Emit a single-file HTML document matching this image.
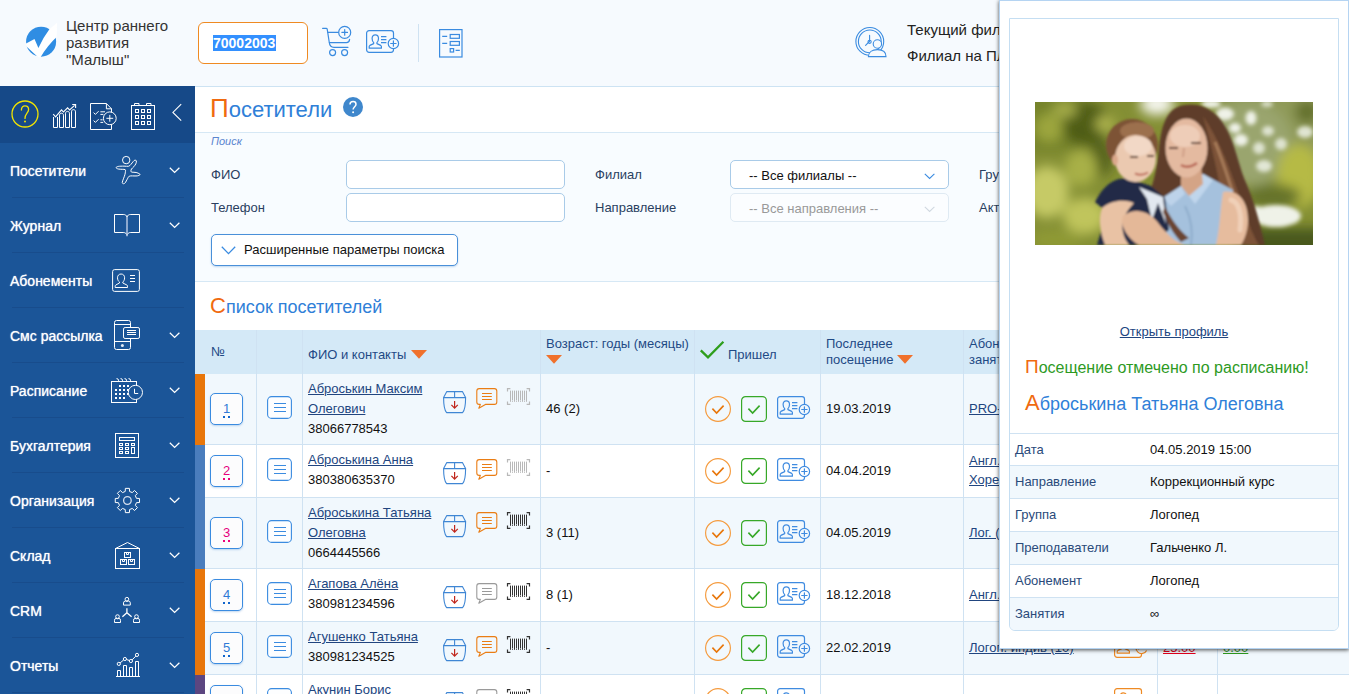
<!DOCTYPE html>
<html lang="ru">
<head>
<meta charset="utf-8">
<title>Посетители</title>
<style>
*{box-sizing:border-box}
html,body{margin:0;padding:0}
body{width:1349px;height:694px;overflow:hidden;position:relative;background:#fff;
  font-family:"Liberation Sans",Arial,sans-serif;font-size:13px;color:#111;line-height:20px}
a{color:#21457f;text-decoration:underline}
svg{display:block;overflow:visible}
.abs{position:absolute}

/* ---------- header ---------- */
#header{position:absolute;left:0;top:0;width:1349px;height:87px;background:#f6fafe;border-bottom:1px solid #cde3f3}
#org{position:absolute;left:66px;top:17px;font-size:15px;line-height:17px;color:#333;width:120px}
#code{position:absolute;left:198px;top:22px;width:110px;height:42px;border:1px solid #ef8a22;border-radius:6px;background:#fff}
#code span{position:absolute;left:14px;top:12px;width:63px;height:16px;line-height:16px;font-size:14px;font-weight:bold;color:#fff;background:#3390ff;white-space:nowrap}
#hsep{position:absolute;left:418px;top:24px;width:1px;height:38px;background:#cfe2f2}
#branch{position:absolute;left:907px;top:17px;font-size:15px;line-height:26px;color:#222;white-space:nowrap}

/* ---------- sidebar ---------- */
#sidebar{position:absolute;left:0;top:86px;width:195px;height:608px;background:#1b5598}
#sidetop{position:absolute;left:0;top:0;width:195px;height:57px;background:#164988}
.mi{position:absolute;left:0;width:195px;height:55px;color:#fff;font-size:14px}
.mi .t{position:absolute;left:10px;top:18px;line-height:20px;white-space:nowrap;text-shadow:0 0 1px rgba(255,255,255,.9)}
.mi .ln{position:absolute;left:12px;top:54px;width:172px;height:1px;background:#184c8c}

/* ---------- main ---------- */
#main{position:absolute;left:0;top:0;width:1349px;height:694px;background:#fff}
h1{position:absolute;left:210px;top:93px;margin:0;font-weight:normal;font-size:22px;line-height:30px;color:#2f80d8;white-space:nowrap}
h1 b,h2 b,.h3 b{font-weight:normal;color:#f06a10}
h1 b{font-size:26px}
#search{position:absolute;left:195px;top:132px;width:1154px;height:150px;background:#f8fcff;border-top:1px solid #d6e8f5;border-bottom:1px solid #d6e8f5}
#search .cap{position:absolute;left:16px;top:1px;font-size:11px;font-style:italic;color:#5b85cf;line-height:14px}
.lbl{position:absolute;font-size:13px;color:#2a3f5f;line-height:20px;white-space:nowrap}
.inp{position:absolute;width:219px;height:29px;border:1px solid #a9cbe8;border-radius:5px;background:#fff}
.sel{position:absolute;width:219px;height:29px;border:1px solid #a9cbe8;border-radius:5px;background:#fff;font-size:13px;line-height:28px;padding-left:18px;padding-top:1px;color:#111}
.sel.dis{border-color:#dfeaf3;color:#999;background:#fbfdff}
#adv{position:absolute;left:211px;top:234px;width:247px;height:32px;border:1px solid #4a90d9;border-radius:5px;background:#fff;font-size:13px;line-height:29px;padding-left:32px;color:#111;box-shadow:0 1px 2px rgba(80,140,210,.35)}
h2{position:absolute;left:210px;top:293px;margin:0;font-weight:normal;font-size:18px;line-height:26px;color:#2f80d8;white-space:nowrap}
h2 b{font-size:22px}

/* ---------- table ---------- */
#thead{position:absolute;left:195px;top:330px;width:1154px;height:44px;background:#d4e9f7}
.th{position:absolute;font-size:13px;line-height:16px;color:#1f4a85;white-space:nowrap}
.vl{position:absolute;top:330px;width:1px;height:364px;background:#cfe2f2}
.row{position:absolute;left:195px;width:1154px;border-bottom:1px solid #cfe2f2}
.bar{position:absolute;left:195px;width:10px}
.num{position:absolute;left:210px;width:33px;height:32px;border:1px solid #3a8be0;border-radius:5px;background:#fcfcfd;text-align:center;line-height:30px;font-size:13px;box-shadow:0 1px 2px rgba(80,140,210,.35)}
.num i{position:absolute;left:12px;top:22px;width:2px;height:2px;background:currentColor;filter:brightness(.8) saturate(1.4)}
.num i.d2{left:17px}
.c{position:absolute;white-space:nowrap;line-height:20px;font-size:13px}

/* ---------- popup ---------- */
#pop{position:absolute;left:999px;top:0;width:350px;height:649px;background:#fff;border:1px solid #b5d4f2;box-shadow:0 1px 4px 0 rgba(0,0,0,.7)}
#box{position:absolute;left:9px;top:17px;width:330px;height:613px;border:1px solid #c5def2;border-radius:0 0 6px 6px;overflow:hidden}
#photo{position:absolute;left:25px;top:83px;width:278px;height:143px;overflow:hidden}
#open{position:absolute;left:0;top:303px;width:100%;text-align:center;font-size:13px;line-height:20px}
.h3{position:absolute;left:16px;margin:0;font-weight:normal;white-space:nowrap}
.kv{position:absolute;left:0;width:328px;height:33px;border-top:1px solid #cfe2f2;font-size:13px;line-height:32px}
.kv.alt{background:#f1f8fd}
.kv span{position:absolute;left:5px;color:#2a4a7a}
.kv em{position:absolute;left:140px;font-style:normal;color:#111}
</style>
</head>
<body>

<!-- ================= MAIN ================= -->
<div id="main">
  <h1><b>П</b>осетители</h1>
  <svg class="abs" style="left:343px;top:97px" width="20" height="20" viewBox="0 0 20 20" fill="none" ><circle cx="10" cy="10" r="10" fill="#3f87cc"/><path d="M7 7.6 C7 5.6 8.4 4.6 10.1 4.6 C11.8 4.6 13 5.8 13 7.2 C13 9.6 10.1 9.8 10.1 12.6" stroke="#fff" stroke-width="1.5"/><circle cx="10.1" cy="15.2" r="1" fill="#fff"/></svg>
  <div id="search">
    <div class="cap">Поиск</div>
  </div>
  <div class="lbl" style="left:211px;top:165px">ФИО</div>
  <div class="inp" style="left:346px;top:160px"></div>
  <div class="lbl" style="left:211px;top:198px">Телефон</div>
  <div class="inp" style="left:346px;top:193px"></div>
  <div class="lbl" style="left:595px;top:165px">Филиал</div>
  <div class="sel" style="left:730px;top:160px">-- Все филиалы --<svg class="abs" style="left:193px;top:12px" width="12" height="7" viewBox="0 0 12 7" fill="none" ><path d="M0.8 0.8 L5.6 5.4 L10.4 0.8" stroke="#3a8be0" stroke-width="1.1"/></svg></div>
  <div class="lbl" style="left:595px;top:198px">Направление</div>
  <div class="sel dis" style="left:730px;top:193px">-- Все направления --<svg class="abs" style="left:193px;top:12px" width="12" height="7" viewBox="0 0 12 7" fill="none" ><path d="M0.8 0.8 L5.6 5.4 L10.4 0.8" stroke="#d0d8e0" stroke-width="1.1"/></svg></div>
  <div class="lbl" style="left:979px;top:165px">Группа</div>
  <div class="lbl" style="left:979px;top:198px">Активность</div>
  <div id="adv"><svg class="abs" style="left:9.2px;top:10.6px" width="16" height="9" viewBox="0 0 16 9" fill="none" ><path d="M0.8 0.8 L7.5 7.6 L14.2 0.8" stroke="#3a8be0" stroke-width="1.3"/></svg>Расширенные параметры поиска</div>
  <h2><b>С</b>писок посетителей</h2>

  <div id="thead"></div>
  <div class="th" style="left:211px;top:344px">№</div>
  <div class="th" style="left:308px;top:347px">ФИО и контакты</div><svg class="abs" style="left:411px;top:350px" width="16" height="9" viewBox="0 0 16 9" fill="none" ><path d="M0 0 H16 L8 8.8 Z" fill="#f0712c"/></svg>
  <div class="th" style="left:546px;top:336px">Возраст: годы (месяцы)</div><svg class="abs" style="left:546px;top:355px" width="16" height="9" viewBox="0 0 16 9" fill="none" ><path d="M0 0 H16 L8 8.8 Z" fill="#f0712c"/></svg>
  <svg class="abs" style="left:700px;top:341px" width="24" height="20" viewBox="0 0 24 20" fill="none" ><path d="M0.8 9.4 L8 16.4 L23.4 0.8" stroke="#2e9e1c" stroke-width="2.3"/></svg>
  <div class="th" style="left:728px;top:347px">Пришел</div>
  <div class="th" style="left:826px;top:336px">Последнее<br>посещение</div><svg class="abs" style="left:897px;top:355px" width="16" height="9" viewBox="0 0 16 9" fill="none" ><path d="M0 0 H16 L8 8.8 Z" fill="#f0712c"/></svg>
  <div class="th" style="left:969px;top:336px">Абонементы /<br>занятия</div>
  <div class="th" style="left:1163px;top:335px">Долг</div>
  <div class="th" style="left:1223px;top:335px">Баланс</div>
<div class="row" style="top:374px;height:71px;background:#f1f8fd"></div>
<div class="bar" style="top:374px;height:71px;background:#e8760a"></div>
<div class="num" style="top:393px;color:#2f7ad6">1<i></i><i class="d2"></i></div>
<svg class="abs" style="left:267px;top:396px" width="25" height="23" viewBox="0 0 25 23" fill="none" ><rect x="0.6" y="0.6" width="23.8" height="21.8" rx="4" stroke="#3a8be0" stroke-width="1.1" fill="#fdfeff"/><path d="M7 7.5 H19 M7 11.5 H19 M7 15.5 H19" stroke="#3a8be0" stroke-width="1"/></svg>
<a class="c" style="left:308px;top:379px">Аброськин Максим</a>
<a class="c" style="left:308px;top:399px">Олегович</a>
<div class="c" style="left:308px;top:419px">38066778543</div>
<svg class="abs" style="left:443px;top:391px" width="23" height="23" viewBox="0 0 23 23" fill="none" ><g stroke="#3f86d4" stroke-width="1.1" stroke-linejoin="round"><path d="M3.8 0.6 H19.4 L22.6 6.6 H0.6 Z"/><path d="M11.6 0.6 V6.6"/><path d="M0.6 6.6 C0.6 13 1 19 3.6 21.6 H19.6 C22.2 19 22.6 13 22.6 6.6"/></g><path d="M11.6 10 V17 M8.4 13.8 L11.6 17.2 L14.8 13.8" stroke="#c0261c" stroke-width="1.2"/></svg>
<svg class="abs" style="left:476px;top:388px" width="22" height="21" viewBox="0 0 22 21" fill="none" ><path d="M3.2 0.6 H18.4 Q20.8 0.6 20.8 3 V14 Q20.8 16.4 18.4 16.4 H9.4 L2.8 20.2 L4.4 16.4 H3.2 Q0.8 16.4 0.8 14 V3 Q0.8 0.6 3.2 0.6 Z" stroke="#ea7d14" stroke-width="1.1" stroke-linejoin="round"/><path d="M6 5.5 H15.8 M6 8.5 H15.8 M6 11.5 H15.8" stroke="#ea7d14" stroke-width="1"/></svg>
<svg class="abs" style="left:506px;top:388px" width="25" height="17" viewBox="0 0 25 17" fill="none" ><path d="M4.4 0.6 H1.5 V3.6 M20.6 0.6 H23.5 V3.6 M1.5 13.4 V16.4 H4.4 M23.5 13.4 V16.4 H20.6" stroke="#b8b8b8" stroke-width="1.2"/><rect x="4" y="2.6" width="1" height="11.2" fill="#b8b8b8"/><rect x="6" y="2.6" width="1" height="9.8" fill="#b8b8b8"/><rect x="6" y="12.9" width="1" height="0.9" fill="#b8b8b8"/><rect x="8" y="2.6" width="1" height="11.2" fill="#b8b8b8"/><rect x="10" y="2.6" width="1" height="9.8" fill="#b8b8b8"/><rect x="10" y="12.9" width="1" height="0.9" fill="#b8b8b8"/><rect x="12" y="2.6" width="1" height="11.2" fill="#b8b8b8"/><rect x="14" y="2.6" width="1" height="9.8" fill="#b8b8b8"/><rect x="14" y="12.9" width="1" height="0.9" fill="#b8b8b8"/><rect x="16" y="2.6" width="1" height="11.2" fill="#b8b8b8"/><rect x="18" y="2.6" width="1" height="9.8" fill="#b8b8b8"/><rect x="18" y="12.9" width="1" height="0.9" fill="#b8b8b8"/><rect x="20" y="2.6" width="1" height="11.2" fill="#b8b8b8"/></svg>
<div class="c" style="left:546px;top:399px">46 (2)</div>
<svg class="abs" style="left:705px;top:396px" width="26" height="26" viewBox="0 0 26 26" fill="none" ><circle cx="13" cy="13" r="12.4" stroke="#f59b3e" stroke-width="1.15"/><path d="M7.4 12.6 L11.6 17 L18.6 9.6" stroke="#e8760a" stroke-width="1.6"/></svg>
<svg class="abs" style="left:741px;top:396px" width="26" height="26" viewBox="0 0 26 26" fill="none" ><rect x="0.6" y="0.6" width="24.8" height="24.8" rx="4" stroke="#37a828" stroke-width="1.2"/><path d="M7.4 12.6 L11.6 17 L18.6 9.6" stroke="#37a828" stroke-width="1.6"/></svg>
<svg class="abs" style="left:777px;top:396px" width="34" height="24" viewBox="0 0 34 24" fill="none" ><g stroke="#3f8be0" stroke-width="1.2" stroke-linejoin="round"><rect x="0.6" y="0.6" width="26.9" height="21.7" rx="2.5"/><path d="M9.3 4.8 C11.4 4.8 12.5 6.4 12.5 8.6 C12.5 10.4 11.8 11.8 10.9 12.7 L10.9 13.6 L14.7 15.4 Q15.4 15.8 15.4 16.6 V18.2 H3.2 V16.6 Q3.2 15.8 3.9 15.4 L7.7 13.6 V12.7 C6.8 11.8 6.1 10.4 6.1 8.6 C6.1 6.4 7.2 4.8 9.3 4.8 Z"/><path d="M15 6.6 H20.4 M15 9.6 H20.4 M15 12.6 H20.4"/><circle cx="27.4" cy="13.5" r="5.2" fill="#f1f8fd"/><path d="M27.4 10.8 V16.2 M24.7 13.5 H30.1" stroke-linecap="round"/></g></svg>
<div class="c" style="left:826px;top:399px">19.03.2019</div>
<a class="c" style="left:969px;top:399px">PRO-группа (8)</a>
<svg class="abs" style="left:1114px;top:396px" width="34" height="24" viewBox="0 0 34 24" fill="none" ><g stroke="#ee8a24" stroke-width="1.2" stroke-linejoin="round"><rect x="0.6" y="0.6" width="26.9" height="21.7" rx="2.5"/><path d="M9.3 4.8 C11.4 4.8 12.5 6.4 12.5 8.6 C12.5 10.4 11.8 11.8 10.9 12.7 L10.9 13.6 L14.7 15.4 Q15.4 15.8 15.4 16.6 V18.2 H3.2 V16.6 Q3.2 15.8 3.9 15.4 L7.7 13.6 V12.7 C6.8 11.8 6.1 10.4 6.1 8.6 C6.1 6.4 7.2 4.8 9.3 4.8 Z"/><path d="M15 6.6 H20.4 M15 9.6 H20.4 M15 12.6 H20.4"/><circle cx="27.6" cy="13" r="5.6" fill="#f1f8fd" stroke="none"/><path d="M32.6 15.4 A5.6 5.6 0 1 1 32.9 11.2 M22.4 15.6 L22.6 12.8 L25.2 14.2" /></g></svg>
<div class="row" style="top:445px;height:53px;background:#fff"></div>
<div class="bar" style="top:445px;height:53px;background:#4a7dbd"></div>
<div class="num" style="top:455px;color:#e6007e">2<i></i><i class="d2"></i></div>
<svg class="abs" style="left:267px;top:458px" width="25" height="23" viewBox="0 0 25 23" fill="none" ><rect x="0.6" y="0.6" width="23.8" height="21.8" rx="4" stroke="#3a8be0" stroke-width="1.1" fill="#fdfeff"/><path d="M7 7.5 H19 M7 11.5 H19 M7 15.5 H19" stroke="#3a8be0" stroke-width="1"/></svg>
<a class="c" style="left:308px;top:450px">Аброськина Анна</a>
<div class="c" style="left:308px;top:470px">380380635370</div>
<svg class="abs" style="left:443px;top:462px" width="23" height="23" viewBox="0 0 23 23" fill="none" ><g stroke="#3f86d4" stroke-width="1.1" stroke-linejoin="round"><path d="M3.8 0.6 H19.4 L22.6 6.6 H0.6 Z"/><path d="M11.6 0.6 V6.6"/><path d="M0.6 6.6 C0.6 13 1 19 3.6 21.6 H19.6 C22.2 19 22.6 13 22.6 6.6"/></g><path d="M11.6 10 V17 M8.4 13.8 L11.6 17.2 L14.8 13.8" stroke="#c0261c" stroke-width="1.2"/></svg>
<svg class="abs" style="left:476px;top:459px" width="22" height="21" viewBox="0 0 22 21" fill="none" ><path d="M3.2 0.6 H18.4 Q20.8 0.6 20.8 3 V14 Q20.8 16.4 18.4 16.4 H9.4 L2.8 20.2 L4.4 16.4 H3.2 Q0.8 16.4 0.8 14 V3 Q0.8 0.6 3.2 0.6 Z" stroke="#ea7d14" stroke-width="1.1" stroke-linejoin="round"/><path d="M6 5.5 H15.8 M6 8.5 H15.8 M6 11.5 H15.8" stroke="#ea7d14" stroke-width="1"/></svg>
<svg class="abs" style="left:506px;top:459px" width="25" height="17" viewBox="0 0 25 17" fill="none" ><path d="M4.4 0.6 H1.5 V3.6 M20.6 0.6 H23.5 V3.6 M1.5 13.4 V16.4 H4.4 M23.5 13.4 V16.4 H20.6" stroke="#b8b8b8" stroke-width="1.2"/><rect x="4" y="2.6" width="1" height="11.2" fill="#b8b8b8"/><rect x="6" y="2.6" width="1" height="9.8" fill="#b8b8b8"/><rect x="6" y="12.9" width="1" height="0.9" fill="#b8b8b8"/><rect x="8" y="2.6" width="1" height="11.2" fill="#b8b8b8"/><rect x="10" y="2.6" width="1" height="9.8" fill="#b8b8b8"/><rect x="10" y="12.9" width="1" height="0.9" fill="#b8b8b8"/><rect x="12" y="2.6" width="1" height="11.2" fill="#b8b8b8"/><rect x="14" y="2.6" width="1" height="9.8" fill="#b8b8b8"/><rect x="14" y="12.9" width="1" height="0.9" fill="#b8b8b8"/><rect x="16" y="2.6" width="1" height="11.2" fill="#b8b8b8"/><rect x="18" y="2.6" width="1" height="9.8" fill="#b8b8b8"/><rect x="18" y="12.9" width="1" height="0.9" fill="#b8b8b8"/><rect x="20" y="2.6" width="1" height="11.2" fill="#b8b8b8"/></svg>
<div class="c" style="left:546px;top:461px">-</div>
<svg class="abs" style="left:705px;top:458px" width="26" height="26" viewBox="0 0 26 26" fill="none" ><circle cx="13" cy="13" r="12.4" stroke="#f59b3e" stroke-width="1.15"/><path d="M7.4 12.6 L11.6 17 L18.6 9.6" stroke="#e8760a" stroke-width="1.6"/></svg>
<svg class="abs" style="left:741px;top:458px" width="26" height="26" viewBox="0 0 26 26" fill="none" ><rect x="0.6" y="0.6" width="24.8" height="24.8" rx="4" stroke="#37a828" stroke-width="1.2"/><path d="M7.4 12.6 L11.6 17 L18.6 9.6" stroke="#37a828" stroke-width="1.6"/></svg>
<svg class="abs" style="left:777px;top:458px" width="34" height="24" viewBox="0 0 34 24" fill="none" ><g stroke="#3f8be0" stroke-width="1.2" stroke-linejoin="round"><rect x="0.6" y="0.6" width="26.9" height="21.7" rx="2.5"/><path d="M9.3 4.8 C11.4 4.8 12.5 6.4 12.5 8.6 C12.5 10.4 11.8 11.8 10.9 12.7 L10.9 13.6 L14.7 15.4 Q15.4 15.8 15.4 16.6 V18.2 H3.2 V16.6 Q3.2 15.8 3.9 15.4 L7.7 13.6 V12.7 C6.8 11.8 6.1 10.4 6.1 8.6 C6.1 6.4 7.2 4.8 9.3 4.8 Z"/><path d="M15 6.6 H20.4 M15 9.6 H20.4 M15 12.6 H20.4"/><circle cx="27.4" cy="13.5" r="5.2" fill="#fff"/><path d="M27.4 10.8 V16.2 M24.7 13.5 H30.1" stroke-linecap="round"/></g></svg>
<div class="c" style="left:826px;top:461px">04.04.2019</div>
<a class="c" style="left:969px;top:451px">Англ. язык (12)</a>
<a class="c" style="left:969px;top:470px">Хореография (8)</a>
<svg class="abs" style="left:1114px;top:458px" width="34" height="24" viewBox="0 0 34 24" fill="none" ><g stroke="#ee8a24" stroke-width="1.2" stroke-linejoin="round"><rect x="0.6" y="0.6" width="26.9" height="21.7" rx="2.5"/><path d="M9.3 4.8 C11.4 4.8 12.5 6.4 12.5 8.6 C12.5 10.4 11.8 11.8 10.9 12.7 L10.9 13.6 L14.7 15.4 Q15.4 15.8 15.4 16.6 V18.2 H3.2 V16.6 Q3.2 15.8 3.9 15.4 L7.7 13.6 V12.7 C6.8 11.8 6.1 10.4 6.1 8.6 C6.1 6.4 7.2 4.8 9.3 4.8 Z"/><path d="M15 6.6 H20.4 M15 9.6 H20.4 M15 12.6 H20.4"/><circle cx="27.6" cy="13" r="5.6" fill="#fff" stroke="none"/><path d="M32.6 15.4 A5.6 5.6 0 1 1 32.9 11.2 M22.4 15.6 L22.6 12.8 L25.2 14.2" /></g></svg>
<div class="row" style="top:498px;height:71px;background:#f1f8fd"></div>
<div class="bar" style="top:498px;height:71px;background:#4a7dbd"></div>
<div class="num" style="top:517px;color:#e6007e">3<i></i><i class="d2"></i></div>
<svg class="abs" style="left:267px;top:520px" width="25" height="23" viewBox="0 0 25 23" fill="none" ><rect x="0.6" y="0.6" width="23.8" height="21.8" rx="4" stroke="#3a8be0" stroke-width="1.1" fill="#fdfeff"/><path d="M7 7.5 H19 M7 11.5 H19 M7 15.5 H19" stroke="#3a8be0" stroke-width="1"/></svg>
<a class="c" style="left:308px;top:503px">Аброськина Татьяна</a>
<a class="c" style="left:308px;top:523px">Олеговна</a>
<div class="c" style="left:308px;top:543px">0664445566</div>
<svg class="abs" style="left:443px;top:515px" width="23" height="23" viewBox="0 0 23 23" fill="none" ><g stroke="#3f86d4" stroke-width="1.1" stroke-linejoin="round"><path d="M3.8 0.6 H19.4 L22.6 6.6 H0.6 Z"/><path d="M11.6 0.6 V6.6"/><path d="M0.6 6.6 C0.6 13 1 19 3.6 21.6 H19.6 C22.2 19 22.6 13 22.6 6.6"/></g><path d="M11.6 10 V17 M8.4 13.8 L11.6 17.2 L14.8 13.8" stroke="#c0261c" stroke-width="1.2"/></svg>
<svg class="abs" style="left:476px;top:512px" width="22" height="21" viewBox="0 0 22 21" fill="none" ><path d="M3.2 0.6 H18.4 Q20.8 0.6 20.8 3 V14 Q20.8 16.4 18.4 16.4 H9.4 L2.8 20.2 L4.4 16.4 H3.2 Q0.8 16.4 0.8 14 V3 Q0.8 0.6 3.2 0.6 Z" stroke="#ea7d14" stroke-width="1.1" stroke-linejoin="round"/><path d="M6 5.5 H15.8 M6 8.5 H15.8 M6 11.5 H15.8" stroke="#ea7d14" stroke-width="1"/></svg>
<svg class="abs" style="left:506px;top:512px" width="25" height="17" viewBox="0 0 25 17" fill="none" ><path d="M4.4 0.6 H1.5 V3.6 M20.6 0.6 H23.5 V3.6 M1.5 13.4 V16.4 H4.4 M23.5 13.4 V16.4 H20.6" stroke="#333" stroke-width="1.2"/><rect x="4" y="2.6" width="1" height="11.2" fill="#333"/><rect x="6" y="2.6" width="1" height="9.8" fill="#333"/><rect x="6" y="12.9" width="1" height="0.9" fill="#333"/><rect x="8" y="2.6" width="1" height="11.2" fill="#333"/><rect x="10" y="2.6" width="1" height="9.8" fill="#333"/><rect x="10" y="12.9" width="1" height="0.9" fill="#333"/><rect x="12" y="2.6" width="1" height="11.2" fill="#333"/><rect x="14" y="2.6" width="1" height="9.8" fill="#333"/><rect x="14" y="12.9" width="1" height="0.9" fill="#333"/><rect x="16" y="2.6" width="1" height="11.2" fill="#333"/><rect x="18" y="2.6" width="1" height="9.8" fill="#333"/><rect x="18" y="12.9" width="1" height="0.9" fill="#333"/><rect x="20" y="2.6" width="1" height="11.2" fill="#333"/></svg>
<div class="c" style="left:546px;top:523px">3 (11)</div>
<svg class="abs" style="left:705px;top:520px" width="26" height="26" viewBox="0 0 26 26" fill="none" ><circle cx="13" cy="13" r="12.4" stroke="#f59b3e" stroke-width="1.15"/><path d="M7.4 12.6 L11.6 17 L18.6 9.6" stroke="#e8760a" stroke-width="1.6"/></svg>
<svg class="abs" style="left:741px;top:520px" width="26" height="26" viewBox="0 0 26 26" fill="none" ><rect x="0.6" y="0.6" width="24.8" height="24.8" rx="4" stroke="#37a828" stroke-width="1.2"/><path d="M7.4 12.6 L11.6 17 L18.6 9.6" stroke="#37a828" stroke-width="1.6"/></svg>
<svg class="abs" style="left:777px;top:520px" width="34" height="24" viewBox="0 0 34 24" fill="none" ><g stroke="#3f8be0" stroke-width="1.2" stroke-linejoin="round"><rect x="0.6" y="0.6" width="26.9" height="21.7" rx="2.5"/><path d="M9.3 4.8 C11.4 4.8 12.5 6.4 12.5 8.6 C12.5 10.4 11.8 11.8 10.9 12.7 L10.9 13.6 L14.7 15.4 Q15.4 15.8 15.4 16.6 V18.2 H3.2 V16.6 Q3.2 15.8 3.9 15.4 L7.7 13.6 V12.7 C6.8 11.8 6.1 10.4 6.1 8.6 C6.1 6.4 7.2 4.8 9.3 4.8 Z"/><path d="M15 6.6 H20.4 M15 9.6 H20.4 M15 12.6 H20.4"/><circle cx="27.4" cy="13.5" r="5.2" fill="#f1f8fd"/><path d="M27.4 10.8 V16.2 M24.7 13.5 H30.1" stroke-linecap="round"/></g></svg>
<div class="c" style="left:826px;top:523px">04.05.2019</div>
<a class="c" style="left:969px;top:523px">Лог. (∞)</a>
<svg class="abs" style="left:1114px;top:520px" width="34" height="24" viewBox="0 0 34 24" fill="none" ><g stroke="#ee8a24" stroke-width="1.2" stroke-linejoin="round"><rect x="0.6" y="0.6" width="26.9" height="21.7" rx="2.5"/><path d="M9.3 4.8 C11.4 4.8 12.5 6.4 12.5 8.6 C12.5 10.4 11.8 11.8 10.9 12.7 L10.9 13.6 L14.7 15.4 Q15.4 15.8 15.4 16.6 V18.2 H3.2 V16.6 Q3.2 15.8 3.9 15.4 L7.7 13.6 V12.7 C6.8 11.8 6.1 10.4 6.1 8.6 C6.1 6.4 7.2 4.8 9.3 4.8 Z"/><path d="M15 6.6 H20.4 M15 9.6 H20.4 M15 12.6 H20.4"/><circle cx="27.6" cy="13" r="5.6" fill="#f1f8fd" stroke="none"/><path d="M32.6 15.4 A5.6 5.6 0 1 1 32.9 11.2 M22.4 15.6 L22.6 12.8 L25.2 14.2" /></g></svg>
<div class="row" style="top:569px;height:53px;background:#fff"></div>
<div class="bar" style="top:569px;height:53px;background:#e8760a"></div>
<div class="num" style="top:579px;color:#2f7ad6">4<i></i><i class="d2"></i></div>
<svg class="abs" style="left:267px;top:582px" width="25" height="23" viewBox="0 0 25 23" fill="none" ><rect x="0.6" y="0.6" width="23.8" height="21.8" rx="4" stroke="#3a8be0" stroke-width="1.1" fill="#fdfeff"/><path d="M7 7.5 H19 M7 11.5 H19 M7 15.5 H19" stroke="#3a8be0" stroke-width="1"/></svg>
<a class="c" style="left:308px;top:574px">Агапова Алёна</a>
<div class="c" style="left:308px;top:594px">380981234596</div>
<svg class="abs" style="left:443px;top:586px" width="23" height="23" viewBox="0 0 23 23" fill="none" ><g stroke="#3f86d4" stroke-width="1.1" stroke-linejoin="round"><path d="M3.8 0.6 H19.4 L22.6 6.6 H0.6 Z"/><path d="M11.6 0.6 V6.6"/><path d="M0.6 6.6 C0.6 13 1 19 3.6 21.6 H19.6 C22.2 19 22.6 13 22.6 6.6"/></g><path d="M11.6 10 V17 M8.4 13.8 L11.6 17.2 L14.8 13.8" stroke="#c0261c" stroke-width="1.2"/></svg>
<svg class="abs" style="left:476px;top:583px" width="22" height="21" viewBox="0 0 22 21" fill="none" ><path d="M3.2 0.6 H18.4 Q20.8 0.6 20.8 3 V14 Q20.8 16.4 18.4 16.4 H9.4 L2.8 20.2 L4.4 16.4 H3.2 Q0.8 16.4 0.8 14 V3 Q0.8 0.6 3.2 0.6 Z" stroke="#9a9a9a" stroke-width="1.1" stroke-linejoin="round"/><path d="M6 5.5 H15.8 M6 8.5 H15.8 M6 11.5 H15.8" stroke="#9a9a9a" stroke-width="1"/></svg>
<svg class="abs" style="left:506px;top:583px" width="25" height="17" viewBox="0 0 25 17" fill="none" ><path d="M4.4 0.6 H1.5 V3.6 M20.6 0.6 H23.5 V3.6 M1.5 13.4 V16.4 H4.4 M23.5 13.4 V16.4 H20.6" stroke="#333" stroke-width="1.2"/><rect x="4" y="2.6" width="1" height="11.2" fill="#333"/><rect x="6" y="2.6" width="1" height="9.8" fill="#333"/><rect x="6" y="12.9" width="1" height="0.9" fill="#333"/><rect x="8" y="2.6" width="1" height="11.2" fill="#333"/><rect x="10" y="2.6" width="1" height="9.8" fill="#333"/><rect x="10" y="12.9" width="1" height="0.9" fill="#333"/><rect x="12" y="2.6" width="1" height="11.2" fill="#333"/><rect x="14" y="2.6" width="1" height="9.8" fill="#333"/><rect x="14" y="12.9" width="1" height="0.9" fill="#333"/><rect x="16" y="2.6" width="1" height="11.2" fill="#333"/><rect x="18" y="2.6" width="1" height="9.8" fill="#333"/><rect x="18" y="12.9" width="1" height="0.9" fill="#333"/><rect x="20" y="2.6" width="1" height="11.2" fill="#333"/></svg>
<div class="c" style="left:546px;top:585px">8 (1)</div>
<svg class="abs" style="left:705px;top:582px" width="26" height="26" viewBox="0 0 26 26" fill="none" ><circle cx="13" cy="13" r="12.4" stroke="#f59b3e" stroke-width="1.15"/><path d="M7.4 12.6 L11.6 17 L18.6 9.6" stroke="#e8760a" stroke-width="1.6"/></svg>
<svg class="abs" style="left:741px;top:582px" width="26" height="26" viewBox="0 0 26 26" fill="none" ><rect x="0.6" y="0.6" width="24.8" height="24.8" rx="4" stroke="#37a828" stroke-width="1.2"/><path d="M7.4 12.6 L11.6 17 L18.6 9.6" stroke="#37a828" stroke-width="1.6"/></svg>
<svg class="abs" style="left:777px;top:582px" width="34" height="24" viewBox="0 0 34 24" fill="none" ><g stroke="#3f8be0" stroke-width="1.2" stroke-linejoin="round"><rect x="0.6" y="0.6" width="26.9" height="21.7" rx="2.5"/><path d="M9.3 4.8 C11.4 4.8 12.5 6.4 12.5 8.6 C12.5 10.4 11.8 11.8 10.9 12.7 L10.9 13.6 L14.7 15.4 Q15.4 15.8 15.4 16.6 V18.2 H3.2 V16.6 Q3.2 15.8 3.9 15.4 L7.7 13.6 V12.7 C6.8 11.8 6.1 10.4 6.1 8.6 C6.1 6.4 7.2 4.8 9.3 4.8 Z"/><path d="M15 6.6 H20.4 M15 9.6 H20.4 M15 12.6 H20.4"/><circle cx="27.4" cy="13.5" r="5.2" fill="#fff"/><path d="M27.4 10.8 V16.2 M24.7 13.5 H30.1" stroke-linecap="round"/></g></svg>
<div class="c" style="left:826px;top:585px">18.12.2018</div>
<a class="c" style="left:969px;top:585px">Англ. язык (4)</a>
<svg class="abs" style="left:1114px;top:582px" width="34" height="24" viewBox="0 0 34 24" fill="none" ><g stroke="#ee8a24" stroke-width="1.2" stroke-linejoin="round"><rect x="0.6" y="0.6" width="26.9" height="21.7" rx="2.5"/><path d="M9.3 4.8 C11.4 4.8 12.5 6.4 12.5 8.6 C12.5 10.4 11.8 11.8 10.9 12.7 L10.9 13.6 L14.7 15.4 Q15.4 15.8 15.4 16.6 V18.2 H3.2 V16.6 Q3.2 15.8 3.9 15.4 L7.7 13.6 V12.7 C6.8 11.8 6.1 10.4 6.1 8.6 C6.1 6.4 7.2 4.8 9.3 4.8 Z"/><path d="M15 6.6 H20.4 M15 9.6 H20.4 M15 12.6 H20.4"/><circle cx="27.6" cy="13" r="5.6" fill="#fff" stroke="none"/><path d="M32.6 15.4 A5.6 5.6 0 1 1 32.9 11.2 M22.4 15.6 L22.6 12.8 L25.2 14.2" /></g></svg>
<div class="row" style="top:622px;height:53px;background:#f1f8fd"></div>
<div class="bar" style="top:622px;height:53px;background:#e8760a"></div>
<div class="num" style="top:632px;color:#2f7ad6">5<i></i><i class="d2"></i></div>
<svg class="abs" style="left:267px;top:635px" width="25" height="23" viewBox="0 0 25 23" fill="none" ><rect x="0.6" y="0.6" width="23.8" height="21.8" rx="4" stroke="#3a8be0" stroke-width="1.1" fill="#fdfeff"/><path d="M7 7.5 H19 M7 11.5 H19 M7 15.5 H19" stroke="#3a8be0" stroke-width="1"/></svg>
<a class="c" style="left:308px;top:627px">Агушенко Татьяна</a>
<div class="c" style="left:308px;top:647px">380981234525</div>
<svg class="abs" style="left:443px;top:639px" width="23" height="23" viewBox="0 0 23 23" fill="none" ><g stroke="#3f86d4" stroke-width="1.1" stroke-linejoin="round"><path d="M3.8 0.6 H19.4 L22.6 6.6 H0.6 Z"/><path d="M11.6 0.6 V6.6"/><path d="M0.6 6.6 C0.6 13 1 19 3.6 21.6 H19.6 C22.2 19 22.6 13 22.6 6.6"/></g><path d="M11.6 10 V17 M8.4 13.8 L11.6 17.2 L14.8 13.8" stroke="#c0261c" stroke-width="1.2"/></svg>
<svg class="abs" style="left:476px;top:636px" width="22" height="21" viewBox="0 0 22 21" fill="none" ><path d="M3.2 0.6 H18.4 Q20.8 0.6 20.8 3 V14 Q20.8 16.4 18.4 16.4 H9.4 L2.8 20.2 L4.4 16.4 H3.2 Q0.8 16.4 0.8 14 V3 Q0.8 0.6 3.2 0.6 Z" stroke="#ea7d14" stroke-width="1.1" stroke-linejoin="round"/><path d="M6 5.5 H15.8 M6 8.5 H15.8 M6 11.5 H15.8" stroke="#ea7d14" stroke-width="1"/></svg>
<svg class="abs" style="left:506px;top:636px" width="25" height="17" viewBox="0 0 25 17" fill="none" ><path d="M4.4 0.6 H1.5 V3.6 M20.6 0.6 H23.5 V3.6 M1.5 13.4 V16.4 H4.4 M23.5 13.4 V16.4 H20.6" stroke="#333" stroke-width="1.2"/><rect x="4" y="2.6" width="1" height="11.2" fill="#333"/><rect x="6" y="2.6" width="1" height="9.8" fill="#333"/><rect x="6" y="12.9" width="1" height="0.9" fill="#333"/><rect x="8" y="2.6" width="1" height="11.2" fill="#333"/><rect x="10" y="2.6" width="1" height="9.8" fill="#333"/><rect x="10" y="12.9" width="1" height="0.9" fill="#333"/><rect x="12" y="2.6" width="1" height="11.2" fill="#333"/><rect x="14" y="2.6" width="1" height="9.8" fill="#333"/><rect x="14" y="12.9" width="1" height="0.9" fill="#333"/><rect x="16" y="2.6" width="1" height="11.2" fill="#333"/><rect x="18" y="2.6" width="1" height="9.8" fill="#333"/><rect x="18" y="12.9" width="1" height="0.9" fill="#333"/><rect x="20" y="2.6" width="1" height="11.2" fill="#333"/></svg>
<div class="c" style="left:546px;top:638px">-</div>
<svg class="abs" style="left:705px;top:635px" width="26" height="26" viewBox="0 0 26 26" fill="none" ><circle cx="13" cy="13" r="12.4" stroke="#f59b3e" stroke-width="1.15"/><path d="M7.4 12.6 L11.6 17 L18.6 9.6" stroke="#e8760a" stroke-width="1.6"/></svg>
<svg class="abs" style="left:741px;top:635px" width="26" height="26" viewBox="0 0 26 26" fill="none" ><rect x="0.6" y="0.6" width="24.8" height="24.8" rx="4" stroke="#37a828" stroke-width="1.2"/><path d="M7.4 12.6 L11.6 17 L18.6 9.6" stroke="#37a828" stroke-width="1.6"/></svg>
<svg class="abs" style="left:777px;top:635px" width="34" height="24" viewBox="0 0 34 24" fill="none" ><g stroke="#3f8be0" stroke-width="1.2" stroke-linejoin="round"><rect x="0.6" y="0.6" width="26.9" height="21.7" rx="2.5"/><path d="M9.3 4.8 C11.4 4.8 12.5 6.4 12.5 8.6 C12.5 10.4 11.8 11.8 10.9 12.7 L10.9 13.6 L14.7 15.4 Q15.4 15.8 15.4 16.6 V18.2 H3.2 V16.6 Q3.2 15.8 3.9 15.4 L7.7 13.6 V12.7 C6.8 11.8 6.1 10.4 6.1 8.6 C6.1 6.4 7.2 4.8 9.3 4.8 Z"/><path d="M15 6.6 H20.4 M15 9.6 H20.4 M15 12.6 H20.4"/><circle cx="27.4" cy="13.5" r="5.2" fill="#f1f8fd"/><path d="M27.4 10.8 V16.2 M24.7 13.5 H30.1" stroke-linecap="round"/></g></svg>
<div class="c" style="left:826px;top:638px">22.02.2019</div>
<a class="c" style="left:969px;top:638px">Логоп. индив (10)</a>
<svg class="abs" style="left:1114px;top:635px" width="34" height="24" viewBox="0 0 34 24" fill="none" ><g stroke="#ee8a24" stroke-width="1.2" stroke-linejoin="round"><rect x="0.6" y="0.6" width="26.9" height="21.7" rx="2.5"/><path d="M9.3 4.8 C11.4 4.8 12.5 6.4 12.5 8.6 C12.5 10.4 11.8 11.8 10.9 12.7 L10.9 13.6 L14.7 15.4 Q15.4 15.8 15.4 16.6 V18.2 H3.2 V16.6 Q3.2 15.8 3.9 15.4 L7.7 13.6 V12.7 C6.8 11.8 6.1 10.4 6.1 8.6 C6.1 6.4 7.2 4.8 9.3 4.8 Z"/><path d="M15 6.6 H20.4 M15 9.6 H20.4 M15 12.6 H20.4"/><circle cx="27.6" cy="13" r="5.6" fill="#f1f8fd" stroke="none"/><path d="M32.6 15.4 A5.6 5.6 0 1 1 32.9 11.2 M22.4 15.6 L22.6 12.8 L25.2 14.2" /></g></svg>
<a class="c" style="left:1163px;top:638px;color:#e3001b">25.00</a>
<a class="c" style="left:1223px;top:638px;color:#2e9a1f">0.00</a>
<div class="row" style="top:675px;height:53px;background:#fff"></div>
<div class="bar" style="top:675px;height:53px;background:#5c4680"></div>
<div class="num" style="top:685px;color:#2f7ad6">6<i></i><i class="d2"></i></div>
<svg class="abs" style="left:267px;top:688px" width="25" height="23" viewBox="0 0 25 23" fill="none" ><rect x="0.6" y="0.6" width="23.8" height="21.8" rx="4" stroke="#3a8be0" stroke-width="1.1" fill="#fdfeff"/><path d="M7 7.5 H19 M7 11.5 H19 M7 15.5 H19" stroke="#3a8be0" stroke-width="1"/></svg>
<a class="c" style="left:308px;top:680px">Акунин Борис</a>
<div class="c" style="left:308px;top:700px">380671234567</div>
<svg class="abs" style="left:443px;top:692px" width="23" height="23" viewBox="0 0 23 23" fill="none" ><g stroke="#3f86d4" stroke-width="1.1" stroke-linejoin="round"><path d="M3.8 0.6 H19.4 L22.6 6.6 H0.6 Z"/><path d="M11.6 0.6 V6.6"/><path d="M0.6 6.6 C0.6 13 1 19 3.6 21.6 H19.6 C22.2 19 22.6 13 22.6 6.6"/></g><path d="M11.6 10 V17 M8.4 13.8 L11.6 17.2 L14.8 13.8" stroke="#c0261c" stroke-width="1.2"/></svg>
<svg class="abs" style="left:476px;top:689px" width="22" height="21" viewBox="0 0 22 21" fill="none" ><path d="M3.2 0.6 H18.4 Q20.8 0.6 20.8 3 V14 Q20.8 16.4 18.4 16.4 H9.4 L2.8 20.2 L4.4 16.4 H3.2 Q0.8 16.4 0.8 14 V3 Q0.8 0.6 3.2 0.6 Z" stroke="#9a9a9a" stroke-width="1.1" stroke-linejoin="round"/><path d="M6 5.5 H15.8 M6 8.5 H15.8 M6 11.5 H15.8" stroke="#9a9a9a" stroke-width="1"/></svg>
<svg class="abs" style="left:506px;top:689px" width="25" height="17" viewBox="0 0 25 17" fill="none" ><path d="M4.4 0.6 H1.5 V3.6 M20.6 0.6 H23.5 V3.6 M1.5 13.4 V16.4 H4.4 M23.5 13.4 V16.4 H20.6" stroke="#333" stroke-width="1.2"/><rect x="4" y="2.6" width="1" height="11.2" fill="#333"/><rect x="6" y="2.6" width="1" height="9.8" fill="#333"/><rect x="6" y="12.9" width="1" height="0.9" fill="#333"/><rect x="8" y="2.6" width="1" height="11.2" fill="#333"/><rect x="10" y="2.6" width="1" height="9.8" fill="#333"/><rect x="10" y="12.9" width="1" height="0.9" fill="#333"/><rect x="12" y="2.6" width="1" height="11.2" fill="#333"/><rect x="14" y="2.6" width="1" height="9.8" fill="#333"/><rect x="14" y="12.9" width="1" height="0.9" fill="#333"/><rect x="16" y="2.6" width="1" height="11.2" fill="#333"/><rect x="18" y="2.6" width="1" height="9.8" fill="#333"/><rect x="18" y="12.9" width="1" height="0.9" fill="#333"/><rect x="20" y="2.6" width="1" height="11.2" fill="#333"/></svg>
<div class="c" style="left:546px;top:691px">-</div>
<svg class="abs" style="left:705px;top:688px" width="26" height="26" viewBox="0 0 26 26" fill="none" ><circle cx="13" cy="13" r="12.4" stroke="#f59b3e" stroke-width="1.15"/><path d="M7.4 12.6 L11.6 17 L18.6 9.6" stroke="#e8760a" stroke-width="1.6"/></svg>
<svg class="abs" style="left:741px;top:688px" width="26" height="26" viewBox="0 0 26 26" fill="none" ><rect x="0.6" y="0.6" width="24.8" height="24.8" rx="4" stroke="#37a828" stroke-width="1.2"/><path d="M7.4 12.6 L11.6 17 L18.6 9.6" stroke="#37a828" stroke-width="1.6"/></svg>
<svg class="abs" style="left:777px;top:688px" width="34" height="24" viewBox="0 0 34 24" fill="none" ><g stroke="#3f8be0" stroke-width="1.2" stroke-linejoin="round"><rect x="0.6" y="0.6" width="26.9" height="21.7" rx="2.5"/><path d="M9.3 4.8 C11.4 4.8 12.5 6.4 12.5 8.6 C12.5 10.4 11.8 11.8 10.9 12.7 L10.9 13.6 L14.7 15.4 Q15.4 15.8 15.4 16.6 V18.2 H3.2 V16.6 Q3.2 15.8 3.9 15.4 L7.7 13.6 V12.7 C6.8 11.8 6.1 10.4 6.1 8.6 C6.1 6.4 7.2 4.8 9.3 4.8 Z"/><path d="M15 6.6 H20.4 M15 9.6 H20.4 M15 12.6 H20.4"/><circle cx="27.4" cy="13.5" r="5.2" fill="#fff"/><path d="M27.4 10.8 V16.2 M24.7 13.5 H30.1" stroke-linecap="round"/></g></svg>
<div class="c" style="left:826px;top:691px">12.03.2019</div>
<a class="c" style="left:969px;top:691px">Англ. язык (8)</a>
<svg class="abs" style="left:1114px;top:688px" width="34" height="24" viewBox="0 0 34 24" fill="none" ><g stroke="#ee8a24" stroke-width="1.2" stroke-linejoin="round"><rect x="0.6" y="0.6" width="26.9" height="21.7" rx="2.5"/><path d="M9.3 4.8 C11.4 4.8 12.5 6.4 12.5 8.6 C12.5 10.4 11.8 11.8 10.9 12.7 L10.9 13.6 L14.7 15.4 Q15.4 15.8 15.4 16.6 V18.2 H3.2 V16.6 Q3.2 15.8 3.9 15.4 L7.7 13.6 V12.7 C6.8 11.8 6.1 10.4 6.1 8.6 C6.1 6.4 7.2 4.8 9.3 4.8 Z"/><path d="M15 6.6 H20.4 M15 9.6 H20.4 M15 12.6 H20.4"/><circle cx="27.6" cy="13" r="5.6" fill="#fff" stroke="none"/><path d="M32.6 15.4 A5.6 5.6 0 1 1 32.9 11.2 M22.4 15.6 L22.6 12.8 L25.2 14.2" /></g></svg>
<a class="c" style="left:1163px;top:691px;color:#e3001b">0.00</a>
<a class="c" style="left:1223px;top:691px;color:#2e9a1f">0.00</a>
  <div class="vl" style="left:256px"></div><div class="vl" style="left:302px"></div><div class="vl" style="left:540px"></div><div class="vl" style="left:694px"></div><div class="vl" style="left:820px"></div><div class="vl" style="left:963px"></div><div class="vl" style="left:1157px"></div><div class="vl" style="left:1217px"></div>
</div>

<!-- ================= HEADER ================= -->
<div id="header">
  <svg class="abs" style="left:20px;top:15px" width="45" height="50" viewBox="0 0 45 50" fill="none" ><g transform="translate(-20 -15)"><circle cx="41.1" cy="41.7" r="15" fill="#2f8de3"/><path d="M25.6 43.8 L34.5 39.1 L38.4 48.1 Q43 37.6 49.4 29.2 L57.2 22.4 L56.6 37 Q47.6 45.4 40.4 57.4 L37.6 56.8 L26.2 46.2 Z" fill="#fff"/></g></svg>
  <div id="org">Центр раннего развития "Малыш"</div>
  <div id="code"><span>70002003</span></div>
  <svg class="abs" style="left:322px;top:26px" width="30" height="31" viewBox="0 0 30 31" fill="none" ><g stroke="#3a8be0" stroke-width="1.2" stroke-linecap="round" stroke-linejoin="round"><path d="M0.6 2.3 H4.2 Q5 2.3 5.2 3.2 L7.2 16 Q7.7 21.3 12 21.3 H26"/><path d="M5.8 6.4 H16.2"/><path d="M7.4 16.6 H24.5 Q27.3 16.6 27.6 13.4"/><circle cx="10.6" cy="26.6" r="3"/><circle cx="22.6" cy="26.6" r="3"/><circle cx="22.7" cy="6.4" r="6"/><path d="M22.7 3.6 V9.2 M19.9 6.4 H25.5"/></g></svg>
  <svg class="abs" style="left:366px;top:30px" width="34" height="24" viewBox="0 0 34 24" fill="none" ><g stroke="#3a8be0" stroke-width="1.2" stroke-linejoin="round"><rect x="0.6" y="0.6" width="26.9" height="21.7" rx="2.5"/><path d="M9.3 4.8 C11.4 4.8 12.5 6.4 12.5 8.6 C12.5 10.4 11.8 11.8 10.9 12.7 L10.9 13.6 L14.7 15.4 Q15.4 15.8 15.4 16.6 V18.2 H3.2 V16.6 Q3.2 15.8 3.9 15.4 L7.7 13.6 V12.7 C6.8 11.8 6.1 10.4 6.1 8.6 C6.1 6.4 7.2 4.8 9.3 4.8 Z"/><path d="M15 6.6 H20.4 M15 9.6 H20.4 M15 12.6 H20.4"/><circle cx="27.4" cy="13.5" r="5.2" fill="#f6fafe"/><path d="M27.4 10.8 V16.2 M24.7 13.5 H30.1" stroke-linecap="round"/></g></svg>
  <div id="hsep"></div>
  <svg class="abs" style="left:439px;top:29px" width="25" height="30" viewBox="0 0 25 30" fill="none" ><g stroke="#3a8be0" stroke-width="1.2"><rect x="0.6" y="0.6" width="22.4" height="27.4"/><path d="M3.2 7.4 H8.2 M3.2 14.4 H8.2 M16.6 21.4 H20.8"/><rect x="11.2" y="5.5" width="9.2" height="3.8"/><rect x="11.2" y="12.5" width="9.2" height="3.8"/><rect x="11.2" y="19.6" width="3.4" height="3.4"/></g></svg>
  <svg class="abs" style="left:855px;top:26px" width="33" height="32" viewBox="0 0 33 32" fill="none" ><g stroke="#3a8be0" stroke-width="1.1"><circle cx="14.8" cy="15.4" r="13.9"/><circle cx="14.8" cy="15.4" r="11.4"/><path d="M14.6 9.4 V15.2 L10.6 19.4" stroke-linecap="round"/><circle cx="14.6" cy="15.8" r="1.6"/><circle cx="22.4" cy="18" r="4.2" fill="#f6fafe"/><path d="M13.4 30.6 C13.4 26 17.4 23.6 22.4 23.6 C27.4 23.6 31 26 31 30.6 Z" fill="#f6fafe"/></g></svg>
  <div id="branch">Текущий филиал<br>Филиал на Площади</div>
</div>

<!-- ================= SIDEBAR ================= -->
<div id="sidebar">
  <div id="sidetop">
    <svg class="abs" style="left:11px;top:14px" width="28" height="28" viewBox="0 0 28 28" fill="none" ><circle cx="14" cy="14" r="13" stroke="#f2e400" stroke-width="1.3"/><path d="M10.4 10 C10.4 7.4 12 5.8 14 5.8 C16.2 5.8 17.6 7.4 17.6 9.4 C17.6 13 14 13.6 14 18.4" stroke="#f2e400" stroke-width="1.3" stroke-linecap="round"/><circle cx="14" cy="21.6" r="1" fill="#f2e400"/></svg>
    <svg class="abs" style="left:53px;top:17px" width="24" height="25" viewBox="0 0 24 25" fill="none" ><g stroke="#fff" stroke-width="1" stroke-linejoin="miter"><path d="M0.5 14 V24.5 H4.5 V14"/><path d="M6.5 12.2 V24.5 H10.5 V12.2"/><path d="M6.5 12.399999999999999 C6.5 10.6 7.7 10.2 8.5 10.2 C9.3 10.2 10.5 10.6 10.5 12.399999999999999"/><path d="M12.5 10.4 V24.5 H16.5 V10.4"/><path d="M12.5 10.600000000000001 C12.5 8.8 13.7 8.4 14.5 8.4 C15.3 8.4 16.5 8.8 16.5 10.600000000000001"/><path d="M18.5 8.6 V24.5 H22.5 V8.6"/><path d="M18.5 8.8 C18.5 7.0 19.7 6.6 20.5 6.6 C21.3 6.6 22.5 7.0 22.5 8.8"/><path d="M0.2 11.2 L2.6 13.8 L8.5 6.8 L10.5 9 L14.6 4.9 L16.6 7 L21.6 2.4" stroke-width="1.1"/><path d="M19.2 1.5 H22.6 V5" stroke-width="1.1"/></g></svg>
    <svg class="abs" style="left:90px;top:17px" width="27" height="27" viewBox="0 0 27 27" fill="none" ><g stroke="#fff" stroke-width="1" stroke-linejoin="miter"><path d="M0.5 0.5 H16.4 L21.5 5.8 V26.5 H0.5 Z"/><path d="M16.4 0.6 V5.8 H21.6"/><path d="M3.6 9.6 L5.4 11.4 L8.6 8.2 M3.6 17.6 L5.4 19.4 L8.6 16.2"/><path d="M10.4 8.8 H15 M10.4 11.4 H13.4 M10.4 16.8 H12.6 M10.4 19.4 H13.2"/><circle cx="19.8" cy="15.3" r="6.4" fill="#164988"/><path d="M19.8 11.9 V18.7 M16.4 15.3 H23.2"/></g></svg>
    <svg class="abs" style="left:131px;top:17px" width="25" height="27" viewBox="0 0 25 27" fill="none" ><g stroke="#fff" stroke-width="1"><rect x="0.5" y="2.5" width="23" height="24"/><path d="M3.5 2.5 V0.5 H8 V2.5 M15.5 2.5 V0.5 H20 V2.5"/><rect x="4.5" y="6.5" width="3" height="3"/><rect x="10.5" y="6.5" width="3" height="3"/><rect x="16.5" y="6.5" width="3" height="3"/><rect x="4.5" y="12.5" width="3" height="3"/><rect x="10.5" y="12.5" width="3" height="3"/><rect x="16.5" y="12.5" width="3" height="3"/><rect x="4.5" y="18.5" width="3" height="3"/><rect x="10.5" y="18.5" width="3" height="3"/><rect x="16.5" y="18.5" width="3" height="3"/></g></svg>
    <svg class="abs" style="left:172px;top:17px" width="10" height="18" viewBox="0 0 10 18" fill="none" ><path d="M9.2 1.2 L0.9 9.4 L9.2 17.6" stroke="#fff" stroke-width="1.1"/></svg>
  </div>
<div class="mi" style="top:57px"><span class="t">Посетители</span><svg class="abs" style="left:116.3px;top:11.1px" width="25" height="30" viewBox="0 0 25 30" fill="none" ><path d="M0.06 13.74 C0.06 13.31 0.92 12.69 2.25 12.42 C3.57 12.15 6.28 12.16 8.01 12.13 C9.74 12.10 11.47 12.53 12.62 12.24 C13.77 11.96 14.15 11.19 14.92 10.40 C15.69 9.61 16.55 8.24 17.23 7.52 C17.90 6.80 18.43 6.18 18.95 6.08 C19.48 5.98 20.25 6.32 20.39 6.94 C20.54 7.57 20.25 8.86 19.82 9.82 C19.39 10.78 18.52 11.84 17.80 12.71 C17.08 13.57 15.98 14.24 15.50 15.01 C15.02 15.78 14.83 16.79 14.92 17.31 C15.02 17.84 15.21 17.99 16.07 18.18 C16.94 18.37 18.86 18.18 20.11 18.47 C21.35 18.75 22.94 19.50 23.56 19.91 C24.19 20.31 24.23 20.55 23.85 20.88 C23.47 21.22 22.46 21.75 21.26 21.92 C20.06 22.09 17.99 21.87 16.65 21.92 C15.31 21.97 14.06 21.73 13.19 22.21 C12.33 22.69 12.14 23.70 11.47 24.80 C10.79 25.91 9.83 28.02 9.16 28.83 C8.49 29.65 7.91 29.75 7.43 29.70 C6.95 29.65 6.28 29.36 6.28 28.55 C6.28 27.73 7.00 26.10 7.43 24.80 C7.87 23.51 8.54 22.02 8.87 20.77 C9.21 19.52 9.40 18.18 9.45 17.31 C9.50 16.45 9.69 15.92 9.16 15.59 C8.63 15.25 7.43 15.39 6.28 15.30 C5.13 15.20 3.29 15.27 2.25 15.01 C1.21 14.75 0.06 14.17 0.06 13.74 Z" stroke="#fff" stroke-width="1" stroke-linejoin="round"/><circle cx="10.2" cy="6.1" r="3.7" stroke="#fff" stroke-width="1"/></svg><svg class="abs" style="left:168.8px;top:23.5px" width="12" height="7" viewBox="0 0 12 7" fill="none" ><path d="M0.8 0.8 L5.6 5.4 L10.4 0.8" stroke="#ffffff" stroke-width="1.25"/></svg><div class="ln"></div></div>
<div class="mi" style="top:112px"><span class="t">Журнал</span><svg class="abs" style="left:114px;top:16px" width="26" height="23" viewBox="0 0 26 23" fill="none" ><path d="M13 3 C12.4 1.2 11.4 0.5 9.2 0.5 H0.5 V18.5 H9.2 C11.4 18.5 12.4 19.4 13 21.2 C13.6 19.4 14.6 18.5 16.8 18.5 H25.5 V0.5 H16.8 C14.6 0.5 13.6 1.2 13 3 Z" stroke="#fff" stroke-width="1" stroke-linejoin="round"/><path d="M13 3 V22.2" stroke="#b4c6e2" stroke-width="1.5"/></svg><svg class="abs" style="left:168.8px;top:23.5px" width="12" height="7" viewBox="0 0 12 7" fill="none" ><path d="M0.8 0.8 L5.6 5.4 L10.4 0.8" stroke="#ffffff" stroke-width="1.25"/></svg><div class="ln"></div></div>
<div class="mi" style="top:167px"><span class="t">Абонементы</span><svg class="abs" style="left:112px;top:16px" width="28" height="23" viewBox="0 0 28 23" fill="none" ><g stroke="#fff" stroke-width="1" stroke-linejoin="round"><rect x="0.6" y="0.6" width="26.8" height="21.8" rx="2"/><path d="M9.1 5 C11.3 5 12.6 6.6 12.6 8.8 C12.6 10.8 11.8 12.2 10.8 13.1 L10.8 14 L14.9 16 Q15.5 16.4 15.5 17.2 V18.5 H3.2 V17.2 Q3.2 16.4 3.8 16 L7.5 14 V13.1 C6.4 12.2 5.5 10.8 5.5 8.8 C5.5 6.6 6.8 5 9.1 5 Z"/><path d="M18 6.5 H23 M18 9.5 H23 M18 12.5 H23"/></g></svg><div class="ln"></div></div>
<div class="mi" style="top:222px"><span class="t">Смс рассылка</span><svg class="abs" style="left:114px;top:12px" width="26" height="30" viewBox="0 0 26 30" fill="none" ><g stroke="#fff" stroke-width="1"><rect x="0.5" y="0.5" width="16" height="29" rx="2"/><path d="M0.5 4.5 H16.5 M0.5 21.5 H16.5"/><circle cx="8.4" cy="25.4" r="1.5" fill="#e4ebf5" stroke="none"/><rect x="9.5" y="7.5" width="16" height="11" rx="1.6" fill="#1b5598"/><path d="M13 10.5 H22 M13 12.5 H22 M13 14.5 H22"/></g></svg><svg class="abs" style="left:168.8px;top:23.5px" width="12" height="7" viewBox="0 0 12 7" fill="none" ><path d="M0.8 0.8 L5.6 5.4 L10.4 0.8" stroke="#ffffff" stroke-width="1.25"/></svg><div class="ln"></div></div>
<div class="mi" style="top:277px"><span class="t">Расписание</span><svg class="abs" style="left:111px;top:15px" width="32" height="26" viewBox="0 0 32 26" fill="none" ><g stroke="#fff" stroke-width="1"><rect x="0.5" y="3.5" width="25" height="21"/><path d="M7.5 3.5 V2.2 Q7.5 0.6 5.5 0.6 M11.5 3.5 V2.2 Q11.5 0.6 9.5 0.6 M15.5 3.5 V2.2 Q15.5 0.6 13.5 0.6 M19.5 3.5 V2.2 Q19.5 0.6 17.5 0.6 "/><rect x="8" y="7" width="2" height="2" fill="#fff" stroke="none"/><rect x="12" y="7" width="2" height="2" fill="#fff" stroke="none"/><rect x="16" y="7" width="2" height="2" fill="#fff" stroke="none"/><rect x="4" y="11" width="2" height="2" fill="#fff" stroke="none"/><rect x="8" y="11" width="2" height="2" fill="#fff" stroke="none"/><rect x="12" y="11" width="2" height="2" fill="#fff" stroke="none"/><rect x="16" y="11" width="2" height="2" fill="#fff" stroke="none"/><rect x="4" y="15" width="2" height="2" fill="#fff" stroke="none"/><rect x="8" y="15" width="2" height="2" fill="#fff" stroke="none"/><rect x="12" y="15" width="2" height="2" fill="#fff" stroke="none"/><rect x="16" y="15" width="2" height="2" fill="#fff" stroke="none"/><rect x="4" y="19" width="2" height="2" fill="#fff" stroke="none"/><rect x="8" y="19" width="2" height="2" fill="#fff" stroke="none"/><rect x="12" y="19" width="2" height="2" fill="#fff" stroke="none"/><circle cx="24.4" cy="14.4" r="7.1" fill="#1b5598"/><path d="M23.5 10.8 V15.5 H27.2"/></g></svg><svg class="abs" style="left:168.8px;top:23.5px" width="12" height="7" viewBox="0 0 12 7" fill="none" ><path d="M0.8 0.8 L5.6 5.4 L10.4 0.8" stroke="#ffffff" stroke-width="1.25"/></svg><div class="ln"></div></div>
<div class="mi" style="top:332px"><span class="t">Бухгалтерия</span><svg class="abs" style="left:115px;top:15px" width="25" height="26" viewBox="0 0 25 26" fill="none" ><g stroke="#fff" stroke-width="1"><rect x="0.5" y="0.5" width="23" height="24"/><rect x="4.5" y="4.5" width="15" height="3"/><rect x="4.5" y="10.5" width="3" height="2"/><rect x="10.5" y="10.5" width="3" height="2"/><rect x="16.5" y="10.5" width="3" height="2"/><rect x="4.5" y="14.5" width="3" height="2"/><rect x="10.5" y="14.5" width="3" height="2"/><rect x="4.5" y="18.5" width="3" height="2"/><rect x="10.5" y="18.5" width="3" height="2"/><rect x="16.5" y="14.5" width="3" height="6"/></g></svg><svg class="abs" style="left:168.8px;top:23.5px" width="12" height="7" viewBox="0 0 12 7" fill="none" ><path d="M0.8 0.8 L5.6 5.4 L10.4 0.8" stroke="#ffffff" stroke-width="1.25"/></svg><div class="ln"></div></div>
<div class="mi" style="top:387px"><span class="t">Организация</span><svg class="abs" style="left:114px;top:14px" width="26" height="26" viewBox="0 0 26 26" fill="none" ><path d="M11.23 4.46 L11.37 1.37 L15.43 1.37 L15.57 4.46 L18.26 5.57 L20.54 3.49 L23.41 6.36 L21.33 8.64 L22.44 11.33 L25.53 11.47 L25.53 15.53 L22.44 15.67 L21.33 18.36 L23.41 20.64 L20.54 23.51 L18.26 21.43 L15.57 22.54 L15.43 25.63 L11.37 25.63 L11.23 22.54 L8.54 21.43 L6.26 23.51 L3.39 20.64 L5.47 18.36 L4.36 15.67 L1.27 15.53 L1.27 11.47 L4.36 11.33 L5.47 8.64 L3.39 6.36 L6.26 3.49 L8.54 5.57 Z" stroke="#fff" stroke-width="1" stroke-linejoin="round"/><circle cx="13.4" cy="13.5" r="3.8" stroke="#d5dfee" stroke-width="1.3"/></svg><svg class="abs" style="left:168.8px;top:23.5px" width="12" height="7" viewBox="0 0 12 7" fill="none" ><path d="M0.8 0.8 L5.6 5.4 L10.4 0.8" stroke="#ffffff" stroke-width="1.25"/></svg><div class="ln"></div></div>
<div class="mi" style="top:442px"><span class="t">Склад</span><svg class="abs" style="left:115px;top:14px" width="26" height="27" viewBox="0 0 26 27" fill="none" ><g stroke="#fff" stroke-width="1" stroke-linejoin="miter"><rect x="0.5" y="6.5" width="24" height="20"/><path d="M0.5 6.5 L12.5 0.5 L24.5 6.5"/><rect x="9.5" y="10.5" width="6" height="5"/><rect x="5.5" y="17.5" width="6" height="5"/><rect x="13.5" y="17.5" width="6" height="5"/><path d="M11.5 10.5 V12.5 H13.5 V10.5 M7.5 17.5 V19.5 H9.5 V17.5 M15.5 17.5 V19.5 H17.5 V17.5"/></g></svg><svg class="abs" style="left:168.8px;top:23.5px" width="12" height="7" viewBox="0 0 12 7" fill="none" ><path d="M0.8 0.8 L5.6 5.4 L10.4 0.8" stroke="#ffffff" stroke-width="1.25"/></svg><div class="ln"></div></div>
<div class="mi" style="top:497px"><span class="t">CRM</span><svg class="abs" style="left:114px;top:14px" width="27" height="27" viewBox="0 0 27 27" fill="none" ><g stroke="#fff" stroke-width="1" stroke-linejoin="round"><circle cx="12.9" cy="2.20" r="1.85"/><path d="M9.50 8.1 V5.90 Q9.50 4.10 11.40 4.00 Q12.9 4.80 14.40 4.00 Q16.30 4.10 16.30 5.90 V8.1 Z"/><circle cx="3.5" cy="19.60" r="1.85"/><path d="M0.50 25.5 V23.30 Q0.50 21.50 2.00 21.40 Q3.5 22.20 5.00 21.40 Q6.50 21.50 6.50 23.30 V25.5 Z"/><circle cx="22.5" cy="19.60" r="1.85"/><path d="M19.50 25.5 V23.30 Q19.50 21.50 21.00 21.40 Q22.5 22.20 24.00 21.40 Q25.50 21.50 25.50 23.30 V25.5 Z"/><path d="M12.9 11.2 V15.8 L8.4 19.8 M12.9 15.8 L17.6 19.8" stroke-width="1.3"/></g></svg><svg class="abs" style="left:168.8px;top:23.5px" width="12" height="7" viewBox="0 0 12 7" fill="none" ><path d="M0.8 0.8 L5.6 5.4 L10.4 0.8" stroke="#ffffff" stroke-width="1.25"/></svg><div class="ln"></div></div>
<div class="mi" style="top:552px"><span class="t">Отчеты</span><svg class="abs" style="left:116px;top:15px" width="25" height="25" viewBox="0 0 25 25" fill="none" ><g stroke="#fff" stroke-width="1"><path d="M0 23.5 H24"/><path d="M1.5 23.5 V17.5 H4.5 V23.5 M7.5 23.5 V12.5 H10.5 V23.5 M13.5 23.5 V14.5 H16.5 V23.5 M19.5 23.5 V8.5 H22.5 V23.5"/><path d="M4.1 9.9 L7.6 7 M10.4 6.5 L13.4 7.5 M16.1 6.9 L19.8 3.1"/><circle cx="2.8" cy="10.9" r="1.6"/><circle cx="8.9" cy="6" r="1.6"/><circle cx="14.9" cy="8" r="1.6"/><circle cx="21" cy="1.9" r="1.6"/></g></svg><svg class="abs" style="left:168.8px;top:23.5px" width="12" height="7" viewBox="0 0 12 7" fill="none" ><path d="M0.8 0.8 L5.6 5.4 L10.4 0.8" stroke="#ffffff" stroke-width="1.25"/></svg><div class="ln"></div></div>
</div>

<!-- ================= POPUP ================= -->
<div id="pop">
  <div id="box">
    <div id="photo"><svg width="278" height="143" viewBox="0 0 278 143">
<filter id="pb1" x="-20%" y="-20%" width="140%" height="140%"><feGaussianBlur stdDeviation="6"/></filter>
<filter id="pb2" x="-20%" y="-20%" width="140%" height="140%"><feGaussianBlur stdDeviation="2.2"/></filter>
<filter id="pb3" x="-20%" y="-20%" width="140%" height="140%"><feGaussianBlur stdDeviation="1.2"/></filter>
<filter id="pb4" x="-20%" y="-20%" width="140%" height="140%"><feGaussianBlur stdDeviation="3"/></filter>
<clipPath id="pc"><rect width="278" height="143"/></clipPath>
<g clip-path="url(#pc)">
<rect width="278" height="143" fill="#848f34"/>
<g filter="url(#pb1)">
 <rect x="-10" y="-10" width="60" height="60" fill="#76832a"/>
 <ellipse cx="50" cy="22" rx="24" ry="22" fill="#4f5d18"/>
 <ellipse cx="66" cy="56" rx="12" ry="18" fill="#56631c"/>
 <ellipse cx="14" cy="26" rx="14" ry="14" fill="#9ca63e"/>
 <ellipse cx="30" cy="8" rx="12" ry="8" fill="#a4ac48"/>
 <ellipse cx="12" cy="90" rx="22" ry="26" fill="#c6ca66"/>
 <ellipse cx="46" cy="66" rx="16" ry="18" fill="#a8b046"/>
 <ellipse cx="50" cy="114" rx="22" ry="18" fill="#c0c55c"/>
 <ellipse cx="20" cy="138" rx="26" ry="10" fill="#8f9a36"/>
 <ellipse cx="70" cy="22" rx="10" ry="8" fill="#b0b650"/>
 <ellipse cx="122" cy="2" rx="17" ry="11" fill="#f6f7f0"/>
 <rect x="180" y="-10" width="110" height="75" fill="#8f9a58"/>
 <ellipse cx="215" cy="42" rx="42" ry="42" fill="#9aa56e"/>
 <ellipse cx="264" cy="74" rx="22" ry="32" fill="#b6ba44"/>
 <ellipse cx="238" cy="94" rx="28" ry="12" fill="#66732c"/>
 <rect x="200" y="126" width="90" height="30" fill="#48581c"/>
 <ellipse cx="272" cy="10" rx="12" ry="12" fill="#636f2a"/>
</g>
<g filter="url(#pb2)" fill="#eff2e8">
 <ellipse cx="190" cy="12" rx="9" ry="6.5"/><ellipse cx="176" cy="2" rx="10" ry="4"/>
 <ellipse cx="216" cy="16" rx="5.5" ry="7"/><ellipse cx="200" cy="26" rx="6" ry="5"/>
 <ellipse cx="206" cy="38" rx="7" ry="6"/><ellipse cx="224" cy="46" rx="6" ry="6" opacity=".8"/>
 <ellipse cx="233" cy="29" rx="6" ry="5" opacity=".8"/><ellipse cx="246" cy="42" rx="6" ry="6" opacity=".8"/>
 <ellipse cx="229" cy="64" rx="8" ry="6" opacity=".85"/><ellipse cx="270" cy="30" rx="8" ry="6" opacity=".85"/>
 <ellipse cx="232" cy="2" rx="6" ry="3" opacity=".8"/><ellipse cx="186" cy="38" rx="5" ry="5" opacity=".6"/>
 <ellipse cx="241" cy="114" rx="25" ry="11"/><ellipse cx="222" cy="112" rx="8" ry="8"/>
</g>
<g filter="url(#pb3)">
 <!-- mother hair -->
 <path d="M150 3 C130 5 126 28 124 46 C122 68 118 82 114 92 L122 143 L230 143 C224 118 219 98 209 76 C201 54 197 26 179 11 C171 4 160 1 150 3 Z" fill="#5f3e2a"/>
 <path d="M168 14 C186 40 198 76 208 104 C213 120 218 134 224 143 L194 143 C190 110 182 60 168 14 Z" fill="#7d5238"/>
 <path d="M180 40 C190 64 198 92 206 116" stroke="#a67a58" stroke-width="3" fill="none"/>
 <!-- child hair -->
 <ellipse cx="97" cy="43" rx="26" ry="26" fill="#7d5236"/>
 <ellipse cx="102" cy="29" rx="17" ry="9" fill="#9c6f4e"/>
 <!-- mother shirt -->
 <path d="M124 98 L146 84 L168 72 L198 88 L190 143 L118 143 Z" fill="#a5c1dd"/>
 <path d="M148 86 L160 102 L178 78 L168 72 Z" fill="#c0d6ec"/>
 <path d="M128 96 L146 84 L150 92 L136 104 Z" fill="#bdd3ea"/>
 <path d="M150 104 C156 116 158 130 156 143" stroke="#8fadcc" stroke-width="2" fill="none"/>
 <!-- mother arm -->
 <path d="M188 90 C203 87 213 99 213 118 C213 130 208 140 206 143 L181 143 C185 126 185 108 188 90 Z" fill="#e6bc9e"/>
 <path d="M196 98 C204 100 207 112 205 128" stroke="#f0d0b8" stroke-width="5" fill="none" stroke-linecap="round"/>
 <!-- mother neck + face -->
 <path d="M146 66 L166 64 L168 82 L154 94 L146 84 Z" fill="#d4a486"/>
 <ellipse cx="151.5" cy="46" rx="21" ry="29.5" fill="#e4baa0"/>
 <ellipse cx="150" cy="34" rx="15" ry="11" fill="#eecdb8"/>
 <path d="M146 63 Q153 67.5 162 61" stroke="#b86452" stroke-width="2.4" fill="none"/>
 <path d="M134 46 H143 M156 41 H166" stroke="#5a3a2a" stroke-width="2.2" fill="none"/>
 <path d="M149 46 L148 55" stroke="#cf9f86" stroke-width="2" fill="none"/>
 <!-- child dress -->
 <path d="M60 100 C68 84 78 76 92 76 L116 84 L130 96 L134 128 L112 143 L62 143 L72 110 Z" fill="#232c47"/>
 <path d="M104 85 L128 95 L131 122 L123 101 L117 118 L112 97 Z" fill="#e2e8f0"/>
 <!-- hair strand under hand -->
 <path d="M130 104 C136 118 146 130 154 136 L146 140 C138 132 132 120 128 110 Z" fill="#6a4530"/>
 <!-- child arm -->
 <path d="M67 106 C76 98 90 97 99 101 C90 110 86 120 88 130 C89 136 92 140 94 143 L70 143 C65 130 63 116 67 106 Z" fill="#e9c2a4"/>
 <!-- mother's hand -->
 <path d="M88 114 C100 104 116 110 124 122 C132 132 140 140 150 143 L104 143 C94 138 84 124 88 114 Z" fill="#e4b898"/>
 <!-- child face -->
 <ellipse cx="100.5" cy="56.5" rx="20.5" ry="23.5" fill="#ebc9b0"/>
 <ellipse cx="103" cy="44" rx="14" ry="10" fill="#f2d8c6"/>
 <ellipse cx="80" cy="58" rx="3" ry="5.5" fill="#dba98c"/>
 <path d="M100 71.5 Q107 74.5 113 70.5" stroke="#bc6856" stroke-width="2" fill="none"/>
 <path d="M95 55 H103 M112 54 H119" stroke="#5a3a2a" stroke-width="2.2" fill="none"/>
</g>
</g>
</svg>
</div>
    <div id="open"><a>Открыть профиль</a></div>
    <div class="h3" style="left:15px;top:336px;font-size:16px;line-height:24px;color:#2e9a1f"><b style="font-size:19px">П</b>осещение отмечено по расписанию!</div>
    <div class="h3" style="left:15px;top:370px;font-size:18px;line-height:28px;color:#2f80d8"><b style="font-size:22px">А</b>броськина Татьяна Олеговна</div>
    <div class="kv" style="top:414px;height:32px;line-height:31px"><span>Дата</span><em>04.05.2019 15:00</em></div>
    <div class="kv alt" style="top:446px"><span>Направление</span><em>Коррекционный курс</em></div>
    <div class="kv" style="top:479px"><span>Группа</span><em>Логопед</em></div>
    <div class="kv alt" style="top:512px"><span>Преподаватели</span><em>Гальченко Л.</em></div>
    <div class="kv" style="top:545px"><span>Абонемент</span><em>Логопед</em></div>
    <div class="kv alt" style="top:578px"><span>Занятия</span><em>∞</em></div>
  </div>
</div>

</body>
</html>
